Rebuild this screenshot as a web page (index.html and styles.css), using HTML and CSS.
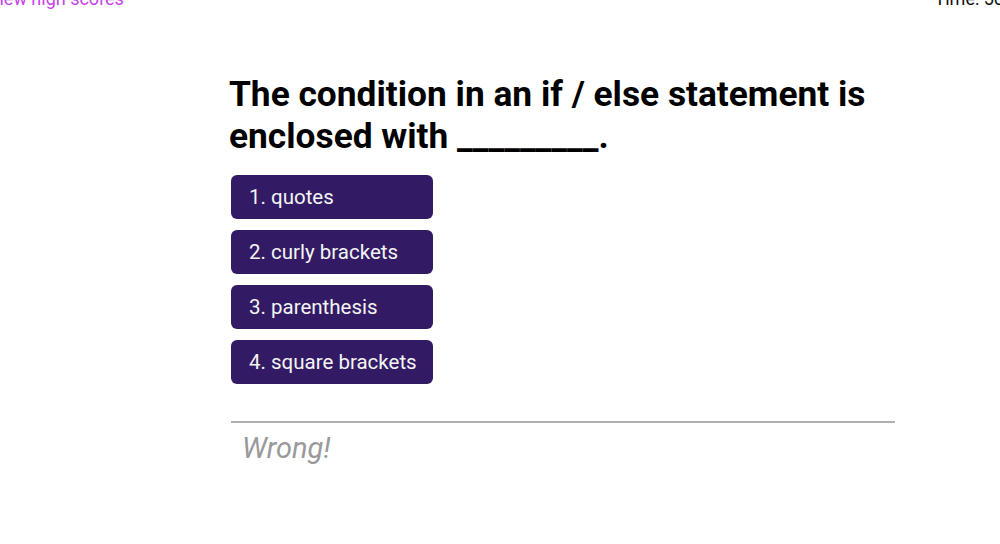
FILE: index.html
```html
<!DOCTYPE html>
<html>
<head>
<meta charset="utf-8">
<link rel="stylesheet" href="styles.css">
</head>
<body>
<header class="top">
  <a class="scores" href="#">View high scores</a>
  <span class="timer">Time: 50</span>
</header>
<main class="quiz">
  <h1 class="question">The condition in an if / else statement is enclosed with _________.</h1>
  <div class="choices">
    <button class="choice">1. quotes</button>
    <button class="choice">2. curly brackets</button>
    <button class="choice">3. parenthesis</button>
    <button class="choice">4. square brackets</button>
  </div>
  <div class="feedback">
    <p class="result">Wrong!</p>
  </div>
</main>
</body>
</html>
```
FILE: styles.css
```css
html, body {
  margin: 0;
  padding: 0;
  width: 1000px;
  height: 544px;
  overflow: hidden;
  background: #fff;
  font-family: Roboto, "Liberation Sans", sans-serif;
}
.top {
  display: flex;
  justify-content: space-between;
  align-items: baseline;
  margin: -13px -4px 0 -12px;
  height: 24px;
  font-size: 18px;
  line-height: 24px;
}
.scores {
  color: #c643e8;
  text-decoration: none;
}
.timer {
  color: #111;
}
.quiz {
  margin: 62px 0 0 229px;
  width: 666px;
}
.question {
  margin: 0;
  font-size: 35.3px;
  line-height: 42px;
  font-weight: 700;
  color: #000;
  width: 666px;
}
.choices {
  display: flex;
  flex-direction: column;
  align-items: flex-start;
  gap: 11px;
  margin: 18px 0 0 2px;
}
.choice {
  width: 202px;
  height: 44px;
  padding: 0 0 0 18px;
  border: none;
  border-radius: 6px;
  background: #321b64;
  color: #f4f4f4;
  font-family: Roboto, "Liberation Sans", sans-serif;
  font-size: 20.5px;
  text-align: left;
}
.feedback {
  margin: 37px 0 0 2px;
  border-top: 2px solid #b0b0b0;
}
.result {
  margin: 7px 0 0 11px;
  font-size: 29px;
  line-height: 36px;
  font-style: italic;
  color: #999;
}
```
